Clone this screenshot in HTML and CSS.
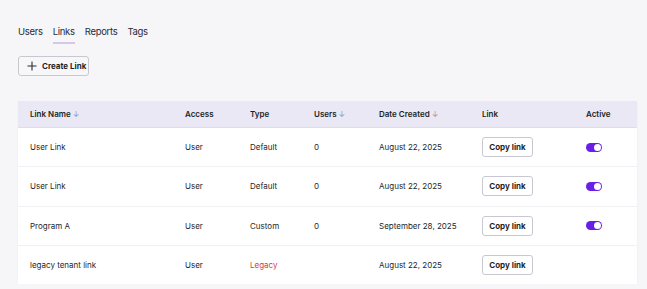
FILE: index.html
```html
<!DOCTYPE html>
<html lang="en">
<head>
  <meta charset="UTF-8">
  <meta name="viewport" content="width=device-width,initial-scale=1.0">
  <title>Links</title>
  <link rel="stylesheet" href="styles.css">
</head>
<body>
  <nav class="tabs">
    <a class="tab">Users</a>
    <a class="tab active">Links</a>
    <a class="tab">Reports</a>
    <a class="tab">Tags</a>
  </nav>

  <button class="create-btn" type="button">
    <svg width="10" height="10" viewBox="0 0 10 10"><path d="M5 0.5V9.5M0.5 5H9.5" stroke="#2a2a33" stroke-width="1.1"/></svg>
    Create Link
  </button>

  <table class="links-table">
    <colgroup>
      <col style="width:155px">
      <col style="width:65px">
      <col style="width:64px">
      <col style="width:65px">
      <col style="width:103px">
      <col style="width:104px">
      <col style="width:63px">
    </colgroup>
    <thead>
      <tr>
        <th>Link Name <span class="sort">&#8595;</span></th>
        <th>Access</th>
        <th>Type</th>
        <th>Users <span class="sort">&#8595;</span></th>
        <th>Date Created <span class="sort">&#8595;</span></th>
        <th>Link</th>
        <th>Active</th>
      </tr>
    </thead>
    <tbody>
      <tr>
        <td>User Link</td>
        <td>User</td>
        <td>Default</td>
        <td>0</td>
        <td>August 22, 2025</td>
        <td><button class="copy-btn" type="button">Copy link</button></td>
        <td><span class="toggle"></span></td>
      </tr>
      <tr>
        <td>User Link</td>
        <td>User</td>
        <td>Default</td>
        <td>0</td>
        <td>August 22, 2025</td>
        <td><button class="copy-btn" type="button">Copy link</button></td>
        <td><span class="toggle"></span></td>
      </tr>
      <tr>
        <td>Program A</td>
        <td>User</td>
        <td>Custom</td>
        <td>0</td>
        <td>September 28, 2025</td>
        <td><button class="copy-btn" type="button">Copy link</button></td>
        <td><span class="toggle"></span></td>
      </tr>
      <tr>
        <td>legacy tenant link</td>
        <td>User</td>
        <td class="legacy">Legacy</td>
        <td></td>
        <td>August 22, 2025</td>
        <td><button class="copy-btn" type="button">Copy link</button></td>
        <td></td>
      </tr>
    </tbody>
  </table>
</body>
</html>
```

FILE: styles.css
```css
body
{
  margin:0;
  padding:0 10px 0 18px;
  background-color:#f6f6f9;
  font-family:Inter,"Noto Sans",sans-serif;
  color:#1f1f26;
}
.tabs
{
  display:flex;
  gap:10px;
  padding-top:25px;
}
.tab
{
  font-size:9.5px;
  line-height:14px;
  letter-spacing:-0.3px;
  padding-bottom:3px;
  border-bottom:2px solid transparent;
  color:#2a2a33;
}
.tab.active
{
  border-bottom-color:#d6c8e8;
}
.create-btn
{
  display:flex;
  align-items:center;
  gap:5px;
  margin-top:12px;
  height:20px;
  width:71px;
  padding:0 0 0 8px;
  background-color:#f7f7fa;
  border:1px solid #c9c8d2;
  border-radius:3px;
  font-family:inherit;
  font-size:8px;
  font-weight:700;
  color:#1f1f26;
}
.links-table
{
  margin-top:25px;
  width:619px;
  table-layout:fixed;
  border-collapse:collapse;
  background-color:#fff;
  box-shadow:0 1px 2px rgba(0,0,0,0.04);
  font-size:8px;
}
.links-table th
{
  height:26px;
  padding:0 0 0 12px;
  background-color:#e9e8f4;
  border-bottom:1px solid #dedcef;
  text-align:left;
  font-weight:600;
}
.links-table td
{
  height:38.3px;
  padding:0 0 0 12px;
  border-bottom:1px solid #f1f1f5;
}
.links-table tr:last-child td
{
  border-bottom:none;
}
.sort
{
  color:#9a98a8;
  font-weight:400;
}
.legacy
{
  color:#d43b3b;
}
.copy-btn
{
  width:51px;
  height:20px;
  padding:0;
  background-color:#fff;
  border:1px solid #c9c8d2;
  border-radius:3px;
  font-family:inherit;
  font-size:8px;
  font-weight:700;
  color:#1f1f26;
}
.toggle
{
  display:block;
  position:relative;
  width:16px;
  height:9px;
  border-radius:5px;
  background-color:#6a1fe6;
}
.toggle::after
{
  content:"";
  position:absolute;
  right:1px;
  top:1px;
  width:7px;
  height:7px;
  border-radius:50%;
  background-color:#fff;
}
```
